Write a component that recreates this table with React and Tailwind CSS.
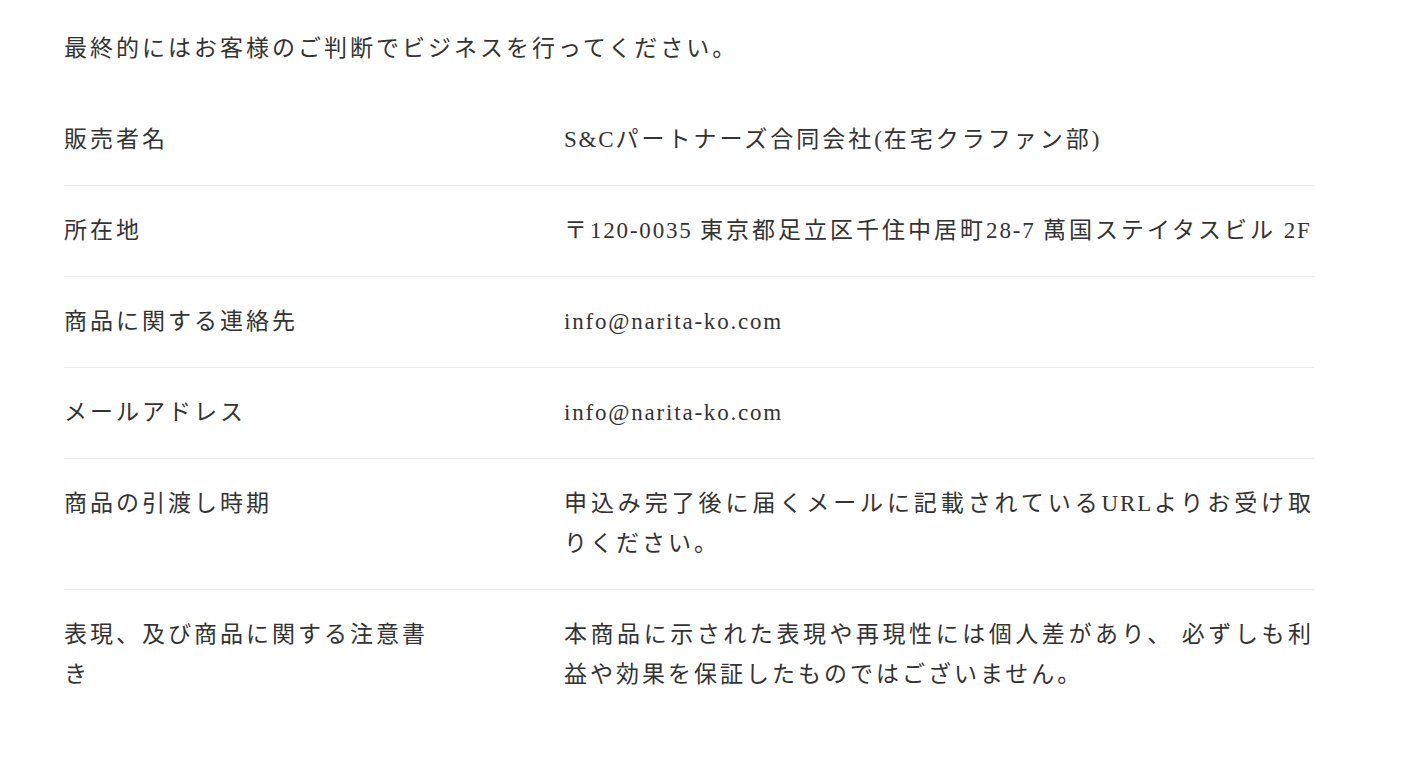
// wrap latin runs so they get tighter tracking than the kana/kanji
function Txt({ children }) {
  const parts = children.split(/([\x20-\x7e]+)/);
  return parts.map((p, i) =>
    /^[\x20-\x7e]+$/.test(p) ? (
      <span key={i} className="tracking-[1.8px]">{p}</span>
    ) : (
      <span key={i}>{p}</span>
    )
  );
}

export default function App() {
  const rows = [
    { label: "販売者名", value: "S&Cパートナーズ合同会社(在宅クラファン部)" },
    { label: "所在地", value: "〒120-0035 東京都足立区千住中居町28-7 萬国ステイタスビル 2F" },
    { label: "商品に関する連絡先", value: "info@narita-ko.com" },
    { label: "メールアドレス", value: "info@narita-ko.com" },
    { label: "商品の引渡し時期", value: "申込み完了後に届くメールに記載されているURLよりお受け取りください。" },
    { label: "表現、及び商品に関する注意書き", value: "本商品に示された表現や再現性には個人差があり、 必ずしも利益や効果を保証したものではございません。" },
  ];

  return (
    <div
      className="min-h-screen bg-white text-[#333] text-[23px] leading-[40px] tracking-[3px]"
      style={{ fontFamily: '"Liberation Serif", "Noto Sans CJK JP", serif' }}
    >
      <div className="w-[1250px] ml-[64px] pt-[29px]">
        <p className="mb-[26px]">最終的にはお客様のご判断でビジネスを行ってください。</p>
        <div>
          {rows.map((row, i) => (
            <div
              key={i}
              className={`grid grid-cols-[500px_750px] py-[25px] ${i < rows.length - 1 ? "border-b border-[#ececec]" : ""}`}
            >
              <div className="pr-[120px]">{row.label}</div>
              <div className="text-justify">
                <Txt>{row.value}</Txt>
              </div>
            </div>
          ))}
        </div>
      </div>
    </div>
  );
}
